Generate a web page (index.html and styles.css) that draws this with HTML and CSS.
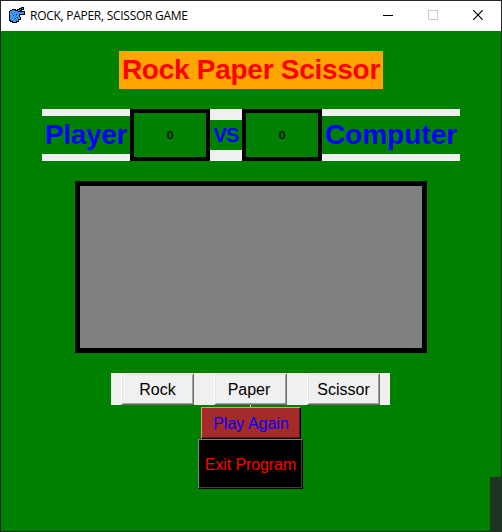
FILE: index.html
```html
<!DOCTYPE html>
<html lang="en">
<head>
<meta charset="utf-8">
<title>ROCK, PAPER, SCISSOR GAME</title>
<link rel="stylesheet" href="styles.css">
</head>
<body>
<div class="window">
  <header class="titlebar">
    <svg class="app-icon" width="18" height="18" viewBox="0 0 18 18" shape-rendering="crispEdges">
      <path d="M1 5H2V4H4V3H8V4H9V3H11V2H13V1H16V4H14V5H17V9H12V11H13V14H11V16H9V17H4V16H2V15H1Z"/>
      <path fill="#3a96f0" d="M2 5H4V4H7V5H10V4H12V3H14V2H15V3H13V4H12V5H10V6H16V8H11V11H12V13H10V15H8V16H5V15H3V14H2Z"/>
      <path d="M8 8H9V9H8ZM5 9H6V10H5ZM9 11H10V12H9ZM7 12H8V13H7Z" fill="#0c3058"/>
    </svg>
    <h1 class="caption">ROCK, PAPER, SCISSOR GAME</h1>
    <div class="controls">
      <svg width="10" height="10" viewBox="0 0 10 10"><path d="M0 5.500H10" stroke="#000"/></svg>
      <svg width="10" height="10" viewBox="0 0 10 10"><path d="M.5 .5H9.500V9.500H.5Z" fill="none" stroke="#ccc"/></svg>
      <svg width="10" height="10" viewBox="0 0 10 10"><path d="M.3 .3L9.700 9.700M9.700 .3L.3 9.700" stroke="#000" stroke-width="1.200"/></svg>
    </div>
  </header>
  <main class="game">
    <h2 class="heading">Rock Paper Scissor</h2>
    <section class="scores">
      <div class="name player">Player</div>
      <div class="score">0</div>
      <div class="versus">VS</div>
      <div class="score">0</div>
      <div class="name computer">Computer</div>
    </section>
    <div class="board"></div>
    <div class="choices">
      <button class="btn">Rock</button>
      <button class="btn paper">Paper</button>
      <button class="btn">Scissor</button>
    </div>
    <div class="tick"></div>
    <button class="again">Play Again</button>
    <button class="exit">Exit Program</button>
  </main>
  <div class="corner"></div>
</div>
</body>
</html>
```
FILE: styles.css
```css
* { box-sizing: border-box; }
body { margin: 0; overflow: hidden; }
.window {
  position: relative;
  width: 502px;
  height: 532px;
  border: 1px solid #26262a;
  background: #008000;
  font-family: "Liberation Sans", Arial, sans-serif;
}
.titlebar {
  display: flex;
  align-items: center;
  height: 30px;
  padding: 0 18px 0 7px;
  background: #fff;
}
.app-icon { flex: none; margin-top: -3px; }
.caption {
  margin: 0 0 0 4px;
  font: 400 12px/16px "Open Sans", sans-serif;
  letter-spacing: -0.27px;
  white-space: nowrap;
}
.controls {
  display: flex;
  gap: 35px;
  margin: -2px 0 0 auto;
}
.controls svg { display: block; }
.game {
  display: flex;
  flex-direction: column;
  align-items: center;
  padding-top: 20px;
}
.heading {
  width: 264px;
  height: 38px;
  margin: 0;
  background: #ffa500;
  color: #f00;
  font-size: 28px;
  line-height: 38px;
  letter-spacing: -0.27px;
  text-align: center;
  white-space: nowrap;
}
.scores {
  display: flex;
  align-items: center;
  width: 418px;
  height: 52px;
  margin-top: 20px;
  background: #f0f0f0;
  color: #00f;
  font-weight: 700;
  text-align: center;
}
.name {
  height: 38px;
  background: #008000;
  font-size: 28px;
  line-height: 38px;
}
.player { width: 88px; letter-spacing: -0.3px; }
.computer { width: 138px; }
.score {
  width: 80px;
  height: 52px;
  border: 4px solid #000;
  background: #008000;
  color: #000;
  font-family: "Open Sans", sans-serif;
  font-weight: 600;
  font-size: 11.5px;
  line-height: 44px;
}
.versus {
  width: 32px;
  height: 30px;
  background: #008000;
  font-size: 20px;
  line-height: 30px;
  letter-spacing: -0.8px;
}
.board {
  width: 352px;
  height: 172px;
  margin-top: 20px;
  border: 5px solid #000;
  background: #808080;
}
.choices {
  display: flex;
  gap: 20px;
  width: 279px;
  height: 32px;
  margin: 20px 1px 0 0;
  padding: 0 10px;
  background: #f0f0f0;
}
button {
  padding: 2px 0 0;
  font-family: inherit;
  font-size: 16px;
  white-space: nowrap;
}
.btn {
  width: 73px;
  height: 32px;
  border: 1px solid;
  border-color: #fff #696969 #696969 #fff;
  background: #f0f0f0;
  box-shadow: inset 1px 1px #e3e3e3, inset -1px -1px #a0a0a0;
  color: #000;
}
.paper { padding-right: 3px; }
.tick {
  width: 1px;
  height: 2px;
  margin-right: 1px;
  background: #f0f0f0;
}
.again {
  width: 100px;
  height: 32px;
  border: 1px solid;
  border-color: #d99a80 #000 #000 #d99a80;
  background: #a52a2a;
  box-shadow: inset -1px -1px #631919;
  color: #00f;
}
.exit {
  width: 105px;
  height: 50px;
  margin-right: 1px;
  border: 1px solid;
  border-color: #808080 #000 #000 #808080;
  background: #000;
  box-shadow: inset -1px -1px #404040;
  color: #f00;
  letter-spacing: -0.1px;
}
.corner {
  position: absolute;
  right: -1px;
  bottom: -1px;
  width: 12px;
  height: 55px;
  background: #213424;
}
```
